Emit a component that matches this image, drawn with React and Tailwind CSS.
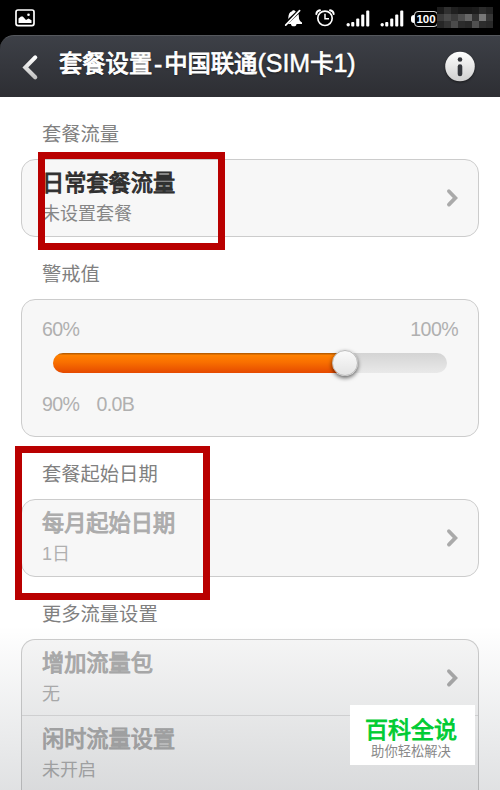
import React from "react";

const mosaicCells = [
  "bg-[#1c1c1c]", "bg-[#303030]", "bg-[#202020]", "bg-[#191919]", "bg-[#191919]", "bg-[#1d1d1d]", "bg-[#2c2c2c]", "bg-[#232323]",
  "bg-[#3a3a3a]", "bg-[#4a4a4a]", "bg-[#3b3b3b]", "bg-[#4e4e4e]", "bg-[#676767]", "bg-[#333333]", "bg-[#777777]", "bg-[#363636]",
  "bg-[#262626]", "bg-[#333333]", "bg-[#4b4b4b]", "bg-[#2c2c2c]", "bg-[#282828]", "bg-[#505050]", "bg-[#2d2d2d]", "bg-[#292929]",
];

const PictureIcon = () => (
  <svg className="h-[18px] w-5" viewBox="0 0 20 18" fill="none">
    <rect x="1" y="1" width="18" height="15.6" rx="2" stroke="#fff" strokeWidth="1.7" />
    <path d="M3.5 14V9.5L6 7.4h1.8L11 11l2.5-1.6 3 1.8V14z" fill="#fff" />
    <circle cx="13.5" cy="5.8" r="1.3" fill="#fff" />
  </svg>
);

const MutedBellIcon = () => (
  <svg className="h-[18px] w-[19px]" viewBox="0 0 19 18" fill="none">
    <path
      d="M9.6 1.2c.9 0 1.4.5 1.5 1.1 2.9.9 3.900 2.8 3.800 5.600-.1 2.500 1 4.200 3.100 5.500v1.600H1.800v-1.600c1.700-1.300 2.400-3 2.600-5.500.2-2.900 1.200-4.700 3.700-5.600.1-.6.6-1.100 1.500-1.100z"
      fill="#fff"
    />
    <path d="M7 15h5.500a2.700 2.300 0 0 1-5.500 0z" fill="#fff" />
    <path d="M1 15.300 16.300 1" stroke="#000" strokeWidth="3.600" />
    <path d="M1.700 16.200 15.600 1.700" stroke="#fff" strokeWidth="1.700" strokeLinecap="round" />
  </svg>
);

const AlarmIcon = () => (
  <svg className="h-[18px] w-5" viewBox="0 0 20 18" fill="none" stroke="#fff">
    <circle cx="10" cy="9.3" r="7.2" strokeWidth="1.7" />
    <path d="M10 4.8v4.900h4" strokeWidth="1.5" />
    <path d="M1.3 5C1.5 2.900 2.900 1.600 5 1.300M15 1.300c2.100.3 3.500 1.600 3.700 3.700" strokeWidth="1.900" strokeLinecap="round" />
  </svg>
);

const SignalIcon = () => (
  <svg className="h-[17px] w-6" viewBox="0 0 24 17" fill="#fff">
    <circle cx="2.2" cy="14.8" r="1.7" />
    <rect x="5.2" y="12" width="3.1" height="4.5" rx="1" />
    <rect x="10.2" y="8.5" width="3.1" height="8" rx="1" />
    <rect x="15.2" y="4.5" width="3.1" height="12" rx="1" />
    <rect x="20.2" y="0.5" width="3.1" height="16" rx="1" />
  </svg>
);

const BatteryIcon = () => (
  <div className="flex items-center">
    <div className="h-2 w-[3px] rounded-l-sm bg-white" />
    <div className="h-4 w-6 rounded-[4px] border-[1.5px] border-[#ddd] text-center text-[11.5px] leading-[14px] font-bold text-white">
      100
    </div>
  </div>
);

const BackIcon = () => (
  <svg className="h-7 w-[19px]" viewBox="0 0 19 28" fill="none">
    <defs>
      <linearGradient id="back" x1="0" y1="0" x2="0" y2="1">
        <stop offset="0" stopColor="#fff" />
        <stop offset="1" stopColor="#c4c4c4" />
      </linearGradient>
    </defs>
    <path d="M14.2 4.400 4.400 14.400l9.800 9.800" stroke="url(#back)" strokeWidth="4.200" strokeLinecap="round" />
  </svg>
);

const InfoIcon = () => (
  <svg className="h-9 w-9 drop-shadow-[0_1px_1px_#0008]" viewBox="0 0 36 36">
    <defs>
      <linearGradient id="info" x1="0" y1="0" x2="0" y2="1">
        <stop offset="0" stopColor="#fff" />
        <stop offset="1" stopColor="#cfcfcf" />
      </linearGradient>
    </defs>
    <circle cx="18" cy="17.500" r="14.800" fill="url(#info)" />
    <circle cx="18" cy="10.500" r="2.300" fill="#34363c" />
    <path d="M18 17.500v7.500" stroke="#34363c" strokeWidth="4.600" strokeLinecap="round" />
  </svg>
);

const ChevronIcon = () => (
  <svg className="h-5 w-3.5 shrink-0" viewBox="0 0 14 20" fill="none">
    <path d="M3.900 3.200 10.400 9.900l-6.500 6.700" stroke="#aaa" strokeWidth="3.700" strokeLinecap="round" />
  </svg>
);

const SectionLabel = ({ children }) => (
  <h2 className="flex h-[62px] items-center pt-[14px] pl-[21px] text-[19.3px] leading-none text-[#808080]">
    {children}
  </h2>
);

const Row = ({ title, value, disabled, chevron = true }) => (
  <div className="flex h-[76px] items-center justify-between pr-[19px] pl-5">
    <div className="pt-[2px]">
      <div
        className={
          disabled
            ? "text-[22.2px] leading-[31px] text-[#acacac] [-webkit-text-stroke:1px_#acacac]"
            : "text-[22.2px] leading-[31px] text-[#303030] [-webkit-text-stroke:1px_#303030]"
        }
      >
        {title}
      </div>
      <div
        className={
          disabled
            ? "text-[18px] leading-[31px] text-[#b0b0b0]"
            : "text-[18px] leading-[31px] text-[#868686]"
        }
      >
        {value}
      </div>
    </div>
    {chevron && <ChevronIcon />}
  </div>
);

function StatusBar() {
  return (
    <div className="flex h-[35px] items-center bg-black pr-[7px] pl-[15px]">
      <PictureIcon />
      <div className="ml-auto flex items-center">
        <MutedBellIcon />
        <div className="ml-[12px]">
          <AlarmIcon />
        </div>
        <div className="mt-[2px] ml-[11px] flex gap-[10px]">
          <SignalIcon />
          <SignalIcon />
        </div>
        <div className="mt-[2px] ml-[7px]">
          <BatteryIcon />
        </div>
        <div className="-ml-px grid grid-cols-8">
          {mosaicCells.map((color, i) => (
            <div key={i} className={`h-[7px] w-[7px] ${color}`} />
          ))}
        </div>
      </div>
    </div>
  );
}

function Header() {
  return (
    <div className="bg-black">
      <div className="flex h-[62px] items-center rounded-tl-[14px] border-t border-[#55585d] bg-[linear-gradient(#3d4047,#2d2e33)] pr-[22px] pl-[21px]">
        <BackIcon />
        <h1 className="mb-[6px] ml-[19px] text-[23.3px] leading-none whitespace-nowrap text-white [-webkit-text-stroke:0.9px_white] [text-shadow:0_1px_2px_#0009]">
          套餐设置<span className="inline-block w-[12px] text-center">-</span>中国联通
          <span className="text-[25px] [-webkit-text-stroke:0.5px_white]">(SIM</span>卡
          <span className="text-[25px] [-webkit-text-stroke:0.5px_white]">1)</span>
        </h1>
        <div className="ml-auto">
          <InfoIcon />
        </div>
      </div>
    </div>
  );
}

function UsageSlider() {
  return (
    <div className="h-[138px] rounded-[14px] border border-[#ccc] bg-[#f7f7f7] px-5 text-[19.6px] leading-[24px] tracking-[-0.6px] text-[#b0b0b0]">
      <div className="mt-[17px] flex justify-between">
        <span>60%</span>
        <span>100%</span>
      </div>
      <div className="relative mx-[11px] mt-3 h-5 rounded-full bg-[linear-gradient(#d4d4d4,#e9e9e9)]">
        <div className="h-5 w-[292px] rounded-l-full bg-[linear-gradient(#a95400,#ff8000_12%,#f97000_45%,#e54a00)]" />
        <div className="absolute top-[-3px] left-[279px] h-[26px] w-[26px] rounded-full border border-[#bbb] bg-[linear-gradient(#fafafa,#e4e4e4)] shadow-[0_2px_4px_#0009]" />
      </div>
      <div className="mt-[19px] flex gap-[17px]">
        <span>90%</span>
        <span>0.0B</span>
      </div>
    </div>
  );
}

export default function App() {
  return (
    <div className="relative h-[790px] w-[500px] overflow-hidden bg-white font-['Liberation_Sans','Noto_Sans_CJK_SC',sans-serif]">
      <StatusBar />
      <Header />

      <div className="px-[21px]">
        <SectionLabel>套餐流量</SectionLabel>
        <div className="rounded-[14px] border border-[#ccc] bg-[#f7f7f7]">
          <Row title="日常套餐流量" value="未设置套餐" />
        </div>

        <SectionLabel>警戒值</SectionLabel>
        <UsageSlider />

        <SectionLabel>套餐起始日期</SectionLabel>
        <div className="rounded-[14px] border border-[#ccc] bg-[#f7f7f7]">
          <Row title="每月起始日期" value="1日" disabled />
        </div>

        <SectionLabel>更多流量设置</SectionLabel>
        <div className="divide-y divide-[#ddd] rounded-t-[14px] border border-b-0 border-[#ccc] bg-[#f7f7f7]">
          <Row title="增加流量包" value="无" disabled />
          <Row title="闲时流量设置" value="未开启" disabled chevron={false} />
        </div>
      </div>

      {/* fade at the bottom edge */}
      <div className="pointer-events-none absolute inset-x-0 bottom-0 h-[165px] bg-[linear-gradient(#0a142000,#0a142020)]" />

      {/* highlight frames */}
      <div className="absolute top-[152px] left-[38px] h-[98px] w-[187px] border-[7px] border-[#b90000]" />
      <div className="absolute top-[446px] left-[15px] h-[154px] w-[195px] border-[7px] border-[#b90000]" />

      <div className="absolute top-[705px] left-[350px] flex h-[60px] w-[125px] flex-col items-center bg-white pt-[12px] pr-[3px]">
        <div className="text-[23px] leading-[26px] text-[#0c3] [-webkit-text-stroke:0.9px_#0c3]">百科全说</div>
        <div className="text-[13.3px] leading-[17px] text-[#888]">助你轻松解决</div>
      </div>
    </div>
  );
}
